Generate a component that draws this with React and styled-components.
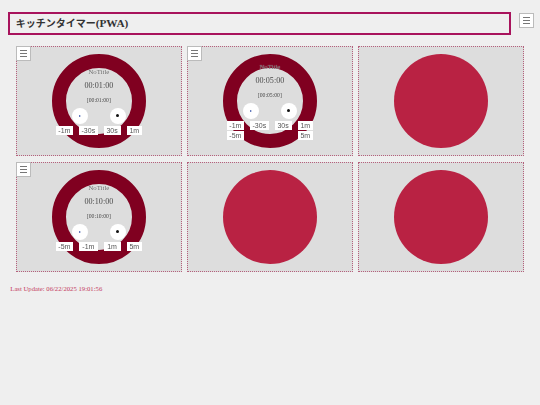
import React from 'react';
import styled, { createGlobalStyle } from 'styled-components';

const GlobalStyle = createGlobalStyle`
  html, body {
    margin: 0;
    background: #efefef;
    font-family: "Liberation Serif", "Noto Sans CJK JP", serif;
  }
`

const Page = styled.div`
  width: 540px;
  height: 405px;
  padding: 12px 6px 0 8.3px;
  box-sizing: border-box;
`

const TopBar = styled.header`
  display: flex;
  align-items: flex-start;
  gap: 8.3px;
`

const Heading = styled.h1`
  width: 502.7px;
  height: 22.7px;
  margin: 0;
  padding-left: 5.4px;
  box-sizing: border-box;
  border: 2px solid #a8135c;
  font-size: 11.3px;
  line-height: 18.7px;
  font-weight: bold;
  color: #333;
  font-family: "Liberation Serif", "Noto Sans CJK JP", serif;
`

const HeadingKana = styled.span`
  font-size: 10px;
`

const MenuButton = styled.button`
  position: ${props => props.$floating ? 'absolute' : 'static'};
  top: -1px;
  left: -1px;
  z-index: 2;
  display: flex;
  flex-direction: column;
  justify-content: center;
  gap: 2px;
  flex-shrink: 0;
  width: 14.4px;
  height: 14.4px;
  margin-top: ${props => props.$floating ? '0' : '1.3px'};
  padding: 0 2.7px;
  box-sizing: border-box;
  background: #fff;
  border: 1px solid #bbb;
`

const MenuLine = styled.span`
  display: block;
  height: 1px;
  background: #777;
`

const TimerGrid = styled.main`
  display: grid;
  grid-template-columns: repeat(3, 165.7px);
  grid-auto-rows: 109.4px;
  column-gap: 5.2px;
  row-gap: 6.6px;
  margin: 11.6px 0 0 8px;
`

const Card = styled.section`
  position: relative;
  display: flex;
  align-items: center;
  justify-content: center;
  background: #dddddd;
  border: 1px dotted #b5607c;
  box-sizing: border-box;
`

const Ring = styled.div`
  width: 94px;
  height: 94px;
  box-sizing: border-box;
  border-radius: 50%;
  background: ${props => props.$idle ? '#b92243' : 'transparent'};
  border: ${props => props.$idle ? 'none' : '14px solid #800020'};
`

const TimerFace = styled.div`
  position: absolute;
  inset: 0;
  padding-top: 1px;
  display: flex;
  flex-direction: column;
  align-items: center;
  justify-content: center;
  color: #4a4a4a;
  will-change: transform;
`

const TimerTitle = styled.div`
  font-size: 6.8px;
  line-height: 10px;
  color: #666;
  text-shadow: 0 0 1px rgba(255, 255, 255, 0.7);
`

const TimerTime = styled.div`
  margin-top: 4.4px;
  font-size: 8.1px;
  line-height: 10px;
`

const TimerTarget = styled.div`
  margin-top: 5px;
  font-size: 5.7px;
  line-height: 8px;
`

const ControlRow = styled.div`
  display: flex;
  gap: 22px;
  margin-top: 3.6px;
`

const RoundButton = styled.button`
  display: flex;
  align-items: center;
  justify-content: center;
  width: 16px;
  height: 16px;
  padding: 0;
  border: none;
  border-radius: 50%;
  background: #fff;
`

const PlayGlyph = styled.span`
  width: 0;
  height: 0;
  border-left: 2.5px solid #3350a8;
  border-top: 1.5px solid transparent;
  border-bottom: 1.5px solid transparent;
`

const StopGlyph = styled.span`
  width: 3px;
  height: 3px;
  border-radius: 50%;
  background: #111;
`

const StepGrid = styled.div`
  display: grid;
  grid-template-columns: 17.5px 18.5px 17px 15.5px;
  column-gap: 6px;
  row-gap: 1px;
  margin-top: 2.5px;
`

const StepButton = styled.button`
  grid-column: ${props => props.$col};
  height: 9px;
  padding: 0;
  border: none;
  background: #fff;
  color: #555;
  font-family: "Liberation Sans", Arial, sans-serif;
  font-size: 7px;
  line-height: 9px;
`

const Footer = styled.footer`
  margin: 12px 0 0 2px;
  font-size: 6.7px;
  line-height: 9px;
  color: #c43a60;
`

const timers = [
  { time: '00:01:00', steps: [['-1m', 1], ['-30s', 2], ['30s', 3], ['1m', 4]] },
  { time: '00:05:00', steps: [['-1m', 1], ['-30s', 2], ['30s', 3], ['1m', 4], ['-5m', 1], ['5m', 4]] },
  null,
  { time: '00:10:00', steps: [['-5m', 1], ['-1m', 2], ['1m', 3], ['5m', 4]] },
  null,
  null,
]

const Menu = ({ floating }) => (
  <MenuButton $floating={floating} aria-label="menu">
    <MenuLine />
    <MenuLine />
    <MenuLine />
  </MenuButton>
)

const Timer = ({ time, steps }) => (
  <Card>
    <Menu floating />
    <Ring />
    <TimerFace>
      <TimerTitle>NoTitle</TimerTitle>
      <TimerTime>{time}</TimerTime>
      <TimerTarget>[{time}]</TimerTarget>
      <ControlRow>
        <RoundButton aria-label="start"><PlayGlyph /></RoundButton>
        <RoundButton aria-label="stop"><StopGlyph /></RoundButton>
      </ControlRow>
      <StepGrid>
        {steps.map(([label, col]) => (
          <StepButton key={label} $col={col}>{label}</StepButton>
        ))}
      </StepGrid>
    </TimerFace>
  </Card>
)

function App() {
  return (
    <Page>
      <GlobalStyle />
      <TopBar>
        <Heading><HeadingKana>キッチンタイマー</HeadingKana>(PWA)</Heading>
        <Menu />
      </TopBar>
      <TimerGrid>
        {timers.map((timer, i) => timer
          ? <Timer key={i} time={timer.time} steps={timer.steps} />
          : <Card key={i}><Ring $idle /></Card>
        )}
      </TimerGrid>
      <Footer>Last Update: 06/22/2025 19:01:56</Footer>
    </Page>
  );
}

export default App;
